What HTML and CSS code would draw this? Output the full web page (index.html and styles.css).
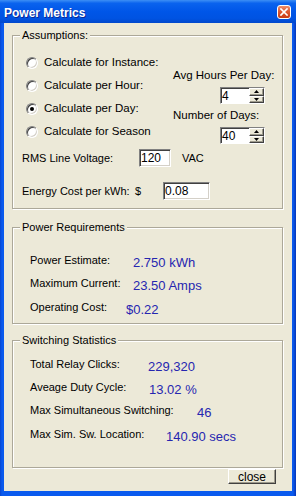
FILE: index.html
```html
<!DOCTYPE html>
<html>
<head>
<meta charset="utf-8">
<title>Power Metrics</title>
<link rel="stylesheet" href="styles.css">
</head>
<body>
<div class="window">
  <div class="titlebar">
    <span class="title">Power Metrics</span>
    <span class="close-x"><svg width="8" height="8" viewBox="0 0 8 8"><path d="M1 1L7 7M7 1L1 7" stroke="#fff" stroke-width="1.7" stroke-linecap="square"/></svg></span>
  </div>
  <div class="client">
    <fieldset class="group assumptions">
      <legend>Assumptions:</legend>
      <div class="assume-top">
        <div class="radios">
          <div class="radio-row"><span class="radio"></span><span>Calculate for Instance:</span></div>
          <div class="radio-row"><span class="radio"></span><span>Calculate per Hour:</span></div>
          <div class="radio-row"><span class="radio checked"></span><span>Calculate per Day:</span></div>
          <div class="radio-row"><span class="radio"></span><span>Calculate for Season</span></div>
        </div>
        <div class="spins">
          <div class="spin-label">Avg Hours Per Day:</div>
          <div class="spinner">
            <span class="spin-value">4</span>
            <span class="spin-btns">
              <span class="spin-btn"><svg width="5" height="3" viewBox="0 0 5 3"><polygon points="2.5,0 5,3 0,3" fill="#000"/></svg></span>
              <span class="spin-btn"><svg width="5" height="3" viewBox="0 0 5 3"><polygon points="0,0 5,0 2.5,3" fill="#000"/></svg></span>
            </span>
          </div>
          <div class="spin-label">Number of Days:</div>
          <div class="spinner">
            <span class="spin-value">40</span>
            <span class="spin-btns">
              <span class="spin-btn"><svg width="5" height="3" viewBox="0 0 5 3"><polygon points="2.5,0 5,3 0,3" fill="#000"/></svg></span>
              <span class="spin-btn"><svg width="5" height="3" viewBox="0 0 5 3"><polygon points="0,0 5,0 2.5,3" fill="#000"/></svg></span>
            </span>
          </div>
        </div>
      </div>
      <div class="field-row rms">
        <span class="field-label">RMS Line Voltage:</span>
        <span class="textbox tb-volt">120</span>
        <span class="unit">VAC</span>
      </div>
      <div class="field-row cost">
        <span class="field-label">Energy Cost per kWh:</span>
        <span class="currency">$</span>
        <span class="textbox tb-cost">0.08</span>
      </div>
    </fieldset>

    <fieldset class="group requirements">
      <legend>Power Requirements</legend>
      <div class="stats">
        <div class="stat r-estimate"><span class="stat-label">Power Estimate:</span><span class="stat-value">2.750 kWh</span></div>
        <div class="stat r-current"><span class="stat-label">Maximum Current:</span><span class="stat-value">23.50 Amps</span></div>
        <div class="stat r-cost"><span class="stat-label">Operating Cost:</span><span class="stat-value">$0.22</span></div>
      </div>
    </fieldset>

    <fieldset class="group switching">
      <legend>Switching Statistics</legend>
      <div class="stats">
        <div class="stat s-clicks"><span class="stat-label">Total Relay Clicks:</span><span class="stat-value">229,320</span></div>
        <div class="stat s-duty"><span class="stat-label">Aveage Duty Cycle:</span><span class="stat-value">13.02 %</span></div>
        <div class="stat s-simul"><span class="stat-label">Max Simultaneous Switching:</span><span class="stat-value">46</span></div>
        <div class="stat s-loc"><span class="stat-label">Max Sim. Sw. Location:</span><span class="stat-value">140.90 secs</span></div>
      </div>
    </fieldset>

    <div class="actions"><button class="btn">close</button></div>
  </div>
</div>
</body>
</html>
```
FILE: styles.css
```css
html, body {
  margin: 0;
  padding: 0;
}
body {
  width: 296px;
  height: 496px;
  overflow: hidden;
  font-family: "Liberation Sans", Arial, sans-serif;
  font-size: 11px;
  color: #000;
}
.window {
  width: 296px;
  height: 496px;
  display: flex;
  flex-direction: column;
  background: linear-gradient(to right, #0846D0 0px, #0A5AEE 2px, #0A5AEE 293px, #0736B8 296px);
}
.titlebar {
  height: 23px;
  flex: none;
  box-sizing: border-box;
  display: flex;
  align-items: center;
  justify-content: space-between;
  padding: 0 5px 0 4px;
  background: linear-gradient(to bottom, #3D8FF5 0%, #0A63EE 14%, #0056E8 50%, #0053E2 80%, #0148CC 100%);
}
.title {
  color: #fff;
  font-weight: bold;
  font-size: 12px;
  padding-top: 2px;
  text-shadow: 1px 1px 0 #0A2A96;
}
.close-x {
  width: 14px;
  height: 14px;
  box-sizing: border-box;
  border: 1px solid #fff;
  border-radius: 3px;
  background: linear-gradient(to bottom, #EE8E6C 0%, #DE5A33 45%, #C83A13 100%);
  display: flex;
  align-items: center;
  justify-content: center;
}
.close-x svg { display: block; }
.client {
  flex: 1;
  margin: 0 4px 5px 4px;
  background: #ECE9D8;
  display: flex;
  flex-direction: column;
}
.group {
  margin: 0 9px 0 8px;
  padding: 0;
  min-width: 0;
  border: 1px solid #ACA899;
  box-shadow: inset 1px 1px 0 #fff, 1px 1px 0 #fff;
}
.group legend {
  margin-left: 7px;
  padding: 0 2px;
  background: #ECE9D8;
  font-size: 11px;
  line-height: 13px;
}
.assumptions { margin-top: 6px; padding-bottom: 8px; }
.requirements { margin-top: 12px; }
.switching { margin-top: 10px; }

.assume-top {
  display: flex;
  padding-top: 9px;
}
.radios {
  flex: 0 0 160px;
  box-sizing: border-box;
  padding-left: 13px;
  font-size: 11.5px;
}
.radio-row {
  height: 23px;
  display: flex;
  align-items: center;
  gap: 6px;
  line-height: 13px;
}
.radio {
  width: 12px;
  height: 12px;
  box-sizing: border-box;
  border-radius: 50%;
  border: 1px solid;
  border-color: #808080 #fff #fff #808080;
  background: #fff;
  box-shadow: inset 1px 1px 0 #404040, inset -1px -1px 0 #D4D0C8;
  display: flex;
  align-items: center;
  justify-content: center;
}
.radio.checked::after {
  content: "";
  width: 4px;
  height: 4px;
  border-radius: 50%;
  background: #000;
}
.spins {
  padding-top: 18px;
  font-size: 11.5px;
}
.spin-label {
  line-height: 13px;
}
.spin-label + .spinner { margin-top: 5px; }
.spinner + .spin-label { margin-top: 5px; }
.spinner {
  margin-left: 47px;
  width: 45px;
  height: 17px;
  box-sizing: border-box;
  display: flex;
  background: #fff;
  border: 1px solid;
  border-color: #808080 #fff #fff #808080;
  box-shadow: inset 1px 1px 0 #404040;
}
.spin-value {
  flex: 1;
  font-size: 12px;
  line-height: 14px;
  padding: 1px 0 0 1px;
}
.spin-btns {
  width: 15px;
  display: flex;
  flex-direction: column;
}
.spin-btn {
  flex: 1;
  box-sizing: border-box;
  background: #ECE9D8;
  border: 1px solid;
  border-color: #fff #404040 #404040 #fff;
  box-shadow: inset -1px -1px 0 #9D9A8C;
  display: flex;
  align-items: center;
  justify-content: center;
}
.spin-btn svg { display: block; }

.field-row {
  display: flex;
  align-items: baseline;
  padding-left: 9px;
  font-size: 11px;
}
.field-label { line-height: 13px; }
.rms { margin-top: 5px; }
.cost { margin-top: 15px; }
.rms .field-label { width: 117px; }
.cost .field-label { width: 113px; }
.currency { width: 28px; }
.unit { margin-left: 11px; }
.textbox {
  height: 18px;
  box-sizing: border-box;
  background: #fff;
  border: 1px solid;
  border-color: #808080 #fff #fff #808080;
  box-shadow: inset 1px 1px 0 #404040, inset -1px -1px 0 #D4D0C8;
  padding: 1px 1px 0 1px;
  font-size: 12px;
  line-height: 14px;
}
.tb-volt { width: 32px; }
.tb-cost { width: 47px; }

.stats {
  display: grid;
  grid-auto-rows: 23.3px;
  padding-left: 17px;
}
.requirements .stats { padding-top: 15px; padding-bottom: 4px; }
.switching .stats { padding-top: 6px; padding-bottom: 21px; }
.stat {
  display: flex;
  align-items: flex-start;
}
.stat-label {
  font-size: 11px;
  line-height: 23px;
  flex: none;
}
.stat-value {
  font-size: 13px;
  line-height: 23px;
  margin-top: 2px;
  color: #2626B0;
  white-space: nowrap;
}
.r-estimate .stat-label { width: 103px; }
.r-current .stat-label { width: 103px; }
.r-cost .stat-label { width: 96px; }
.s-clicks .stat-label { width: 118px; }
.s-duty .stat-label { width: 119px; }
.s-simul .stat-label { width: 167px; }
.s-loc .stat-label { width: 136px; }

.actions {
  display: flex;
  justify-content: flex-end;
  margin-top: 1px;
  padding-right: 16px;
}
.btn {
  width: 48px;
  height: 15px;
  padding: 0;
  margin: 0;
  font-family: "Liberation Sans", Arial, sans-serif;
  font-size: 12px;
  color: #000;
  background: #ECE9D8;
  border: 1px solid;
  border-color: #fff #404040 #404040 #fff;
  box-shadow: inset -1px -1px 0 #9D9A8C;
  border-radius: 0;
}
```
